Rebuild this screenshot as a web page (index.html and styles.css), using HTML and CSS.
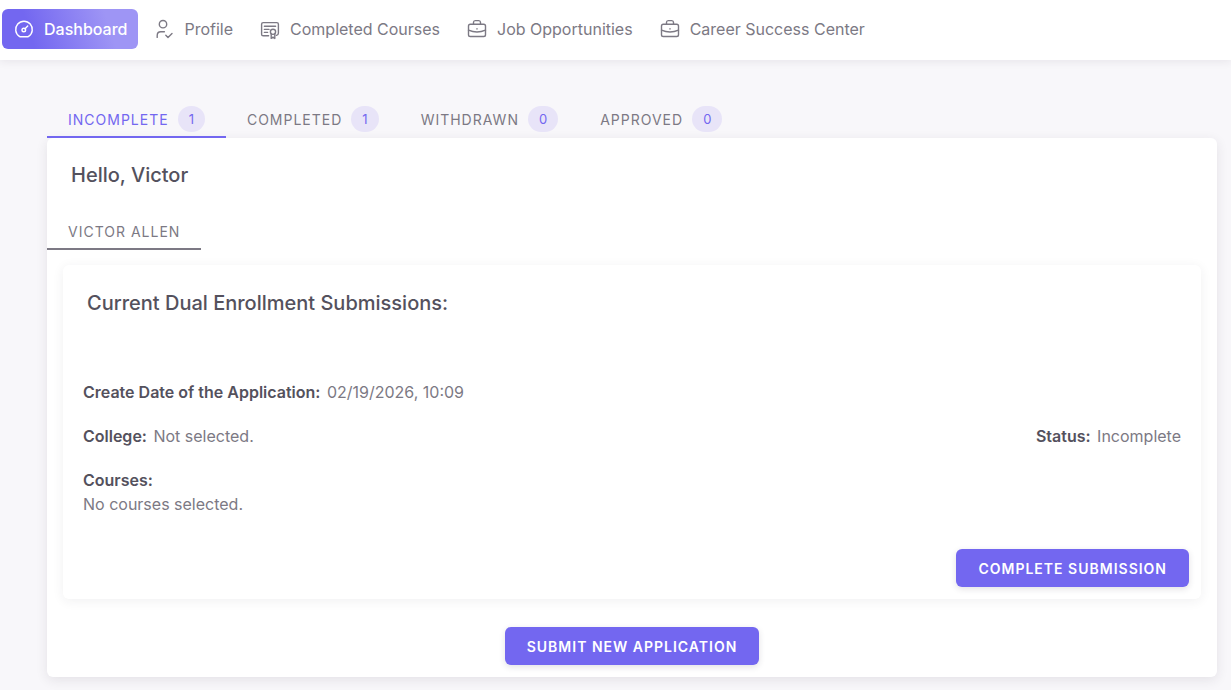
FILE: index.html
```html
<!DOCTYPE html>
<html lang="en">
<head>
  <meta charset="UTF-8">
  <meta name="viewport" content="width=device-width, initial-scale=1.0">
  <title>Dual Enrollment Dashboard</title>
  <link rel="stylesheet" href="styles.css">
</head>
<body>
  <!-- Shared icons -->
  <svg class="sprite" aria-hidden="true">
    <symbol id="icon-briefcase" viewBox="0 0 22 22">
      <rect x="2.5" y="6.2" width="17" height="12.3" rx="1.8"/>
      <path d="M7.5 6.2V4.4Q7.5 2.6 9.2 2.6H12.8Q14.5 2.6 14.5 4.4V6.2M2.5 12.2Q11 15.8 19.5 12.2M11 10.6v.5"/>
    </symbol>
  </svg>

  <header class="navbar">
    <nav class="nav">
      <a class="nav-link active" href="#">
        <svg class="icon" viewBox="0 0 22 22">
          <path d="M6.4 18.4A8.3 8.3 0 1 1 15.6 18.4Q15 18.8 14 18.8H8Q7 18.8 6.4 18.4Z"/>
          <circle cx="10.8" cy="12" r="1.8"/>
          <path d="M12.1 10.7l2.6-2.6"/>
        </svg>
        Dashboard
      </a>
      <a class="nav-link" href="#">
        <svg class="icon" viewBox="0 0 22 22">
          <circle cx="10" cy="6.2" r="3.7"/>
          <path d="M4.2 19.4V17.4Q4.2 13.8 7.8 13.8H11.4M12.8 17.2l2.2 2.2 4-4"/>
        </svg>
        Profile
      </a>
      <a class="nav-link" href="#">
        <svg class="icon" viewBox="0 0 22 22">
          <path d="M9.6 17.8H4.2Q2.6 17.8 2.6 16.2V6.2Q2.6 4.6 4.2 4.6H17.8Q19.4 4.6 19.4 6.2V15Q19.4 17 17.4 17.4M5.4 8.2H16.6M5.4 11.4H10M5.4 14.4H8.6"/>
          <circle cx="14" cy="13.8" r="2.6"/>
          <path d="M12.2 15.8V20.4L14 19.2L15.8 20.4V15.8"/>
        </svg>
        Completed Courses
      </a>
      <a class="nav-link" href="#">
        <svg class="icon"><use href="#icon-briefcase"/></svg>
        Job Opportunities
      </a>
      <a class="nav-link" href="#">
        <svg class="icon"><use href="#icon-briefcase"/></svg>
        Career Success Center
      </a>
    </nav>
  </header>

  <main>
    <div class="tabs">
      <button class="tab active" type="button">Incomplete <span class="badge">1</span></button>
      <button class="tab" type="button">Completed <span class="badge">1</span></button>
      <button class="tab" type="button">Withdrawn <span class="badge">0</span></button>
      <button class="tab" type="button">Approved <span class="badge">0</span></button>
    </div>

    <section class="panel">
      <h1>Hello, Victor</h1>
      <div class="tabs">
        <button class="tab student" type="button">Victor Allen</button>
      </div>

      <!-- Submission -->
      <article class="card">
        <h2>Current Dual Enrollment Submissions:</h2>
        <div class="details">
          <p><strong>Create Date of the Application:</strong> 02/19/2026, 10:09</p>
          <div class="row">
            <p><strong>College:</strong> Not selected.</p>
            <p><strong>Status:</strong> Incomplete</p>
          </div>
          <div>
            <p><strong>Courses:</strong></p>
            <p>No courses selected.</p>
          </div>
        </div>
        <div class="card-actions">
          <button class="btn" type="button">Complete Submission</button>
        </div>
      </article>

      <div class="panel-actions">
        <button class="btn" type="button">Submit New Application</button>
      </div>
    </section>
  </main>
</body>
</html>
```
FILE: styles.css
```css
/* Base styling */
* {
  box-sizing: border-box;
}
body {
  margin: 0;
  font-family: Inter, "Liberation Sans", sans-serif;
  font-size: 16px;
  line-height: 24px;
  background: #f8f7fa;
  color: #7c7984;
}
h1, h2 {
  margin: 0;
  font-size: 20px;
  font-weight: 500;
  line-height: 32px;
  color: #54515d;
}
p {
  margin: 0;
}
strong {
  margin-right: 2px;
  font-weight: 600;
  color: #54515d;
}
button {
  font-family: inherit;
  font-size: 14px;
  letter-spacing: 1px;
  text-transform: uppercase;
  border: none;
  cursor: pointer;
}
.sprite {
  display: none;
}

/* Navigation */
.navbar {
  height: 60px;
  padding: 9px 2px;
  background: #fff;
  box-shadow: 0 2px 8px rgba(47, 43, 61, 0.08);
}
.nav {
  display: flex;
  gap: 4px;
}
.nav-link {
  display: flex;
  align-items: center;
  gap: 9px;
  height: 40px;
  padding: 0 11px;
  border-radius: 6px;
  color: #7c7984;
  text-decoration: none;
  white-space: nowrap;
}
.nav-link.active {
  background: linear-gradient(72deg, #7367f0 22%, #9e95f5 77%);
  color: #fff;
  font-weight: 500;
}
.icon {
  flex: none;
  width: 22px;
  height: 22px;
}
.icon, .sprite {
  fill: none;
  stroke: currentColor;
  stroke-width: 1.4;
  stroke-linecap: round;
  stroke-linejoin: round;
}

/* Tabs */
main {
  padding: 40px 14px 13px 47px;
}
.tabs {
  display: flex;
}
.tab {
  display: flex;
  align-items: center;
  gap: 9px;
  height: 38px;
  padding: 2px 21px 0;
  border-bottom: 2px solid transparent;
  background: none;
  color: #7c7984;
}
.tab.active {
  border-color: #7367f0;
  color: #7367f0;
}
.tab.student {
  border-color: #7c7984;
}
.badge {
  height: 26px;
  padding: 0 10px 0 11px;
  border-radius: 13px;
  background: #e8e4f8;
  color: #7367f0;
  font-size: 13px;
  line-height: 26px;
}

/* Panel and card */
.panel {
  padding-bottom: 12px;
  border-radius: 6px;
  background: #fff;
  box-shadow: 0 3px 12px rgba(47, 43, 61, 0.1);
}
.panel h1 {
  padding: 21px 24px;
}
.card {
  margin: 15px 16px 28px;
  padding: 22px 12px 12px;
  border-radius: 6px;
  background: #fff;
  box-shadow: 0 2px 12px rgba(47, 43, 61, 0.07);
}
.card h2 {
  padding: 0 12px;
}
.details {
  display: flex;
  flex-direction: column;
  gap: 20px;
  padding: 61px 8px 33px;
}
.row {
  display: flex;
  justify-content: space-between;
}
.btn {
  height: 38px;
  padding: 0 22px;
  border-radius: 6px;
  background: #7367f0;
  color: #fff;
  font-weight: 600;
  box-shadow: 0 2px 6px rgba(47, 43, 61, 0.14);
}
.card-actions {
  display: flex;
  justify-content: flex-end;
}
.panel-actions {
  display: flex;
  justify-content: center;
}
```
